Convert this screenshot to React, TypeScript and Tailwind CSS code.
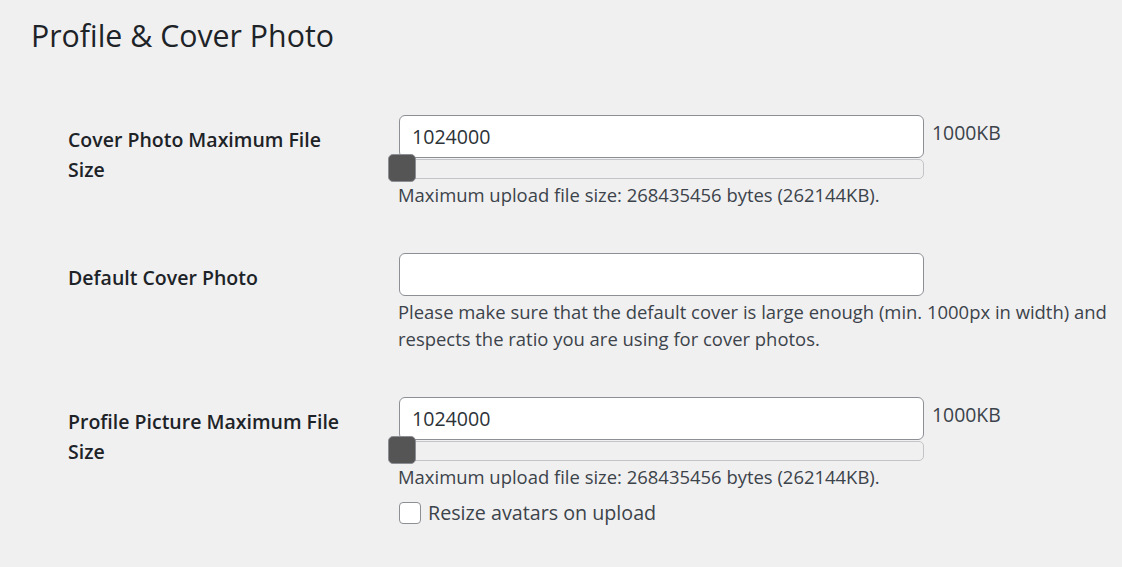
const font = { fontFamily: '"Open Sans", "Noto Sans", sans-serif' };

const SizeField = ({ value }: { value: string }) => (
  <div>
    <div className="flex items-start">
      <input
        type="text"
        defaultValue={value}
        className="h-[43px] w-[525px] rounded-[6px] border border-[#8c8f94] bg-white px-3 text-[19.6px] text-[#2c3338] outline-none"
      />
      <span className="ml-2 mt-[4px] text-[19.4px] leading-[27px] text-[#3c434a]">1000KB</span>
    </div>
    <div className="relative mt-px h-[20px] w-[525px] rounded-[5px] border border-[#c3c4c7] bg-[#f0f0f1]">
      <span className="absolute -left-[12px] -top-[6px] h-[28px] w-[28px] rounded-[5px] border border-[#8c8f94] bg-[#555]" />
    </div>
    <p className="-ml-px mt-[2px] text-[18.45px] leading-[27px] text-[#3c434a]">
      Maximum upload file size: 268435456 bytes (262144KB).
    </p>
  </div>
);

const Row = ({ label, children }: { label: string; children: React.ReactNode }) => (
  <div className="flex">
    <div className="w-[331px] shrink-0 pr-[46px] pt-[10px]">
      <span className="block text-[19.5px] font-semibold leading-[30px] text-[#1d2327]">{label}</span>
    </div>
    <div>{children}</div>
  </div>
);

export default function App() {
  return (
    <div className="min-h-screen bg-[#f0f0f1] pl-[31px] pt-[16px]" style={font}>
      <h2 className="text-[30.3px] leading-[40px] text-[#1d2327]">Profile &amp; Cover Photo</h2>

      <div className="mt-[59px] flex flex-col gap-[45px] pl-[37px]">
        <Row label="Cover Photo Maximum File Size">
          <SizeField value="1024000" />
        </Row>

        <Row label="Default Cover Photo">
          <input
            type="text"
            className="h-[43px] w-[525px] rounded-[6px] border border-[#8c8f94] bg-white px-3 text-[19.6px] outline-none"
          />
          <p className="-ml-px mt-[2px] text-[18.45px] leading-[27px] text-[#3c434a]">
            Please make sure that the default cover is large enough (min. 1000px in width) and
            <br />
            respects the ratio you are using for cover photos.
          </p>
        </Row>

        <Row label="Profile Picture Maximum File Size">
          <SizeField value="1024000" />
          <label className="mt-[9px] flex items-center gap-[7px] text-[19.7px] leading-[27px] text-[#3c434a]">
            <span className="h-[22px] w-[22px] rounded-[4px] border border-[#8c8f94] bg-white" />
            Resize avatars on upload
          </label>
        </Row>
      </div>
    </div>
  );
}
